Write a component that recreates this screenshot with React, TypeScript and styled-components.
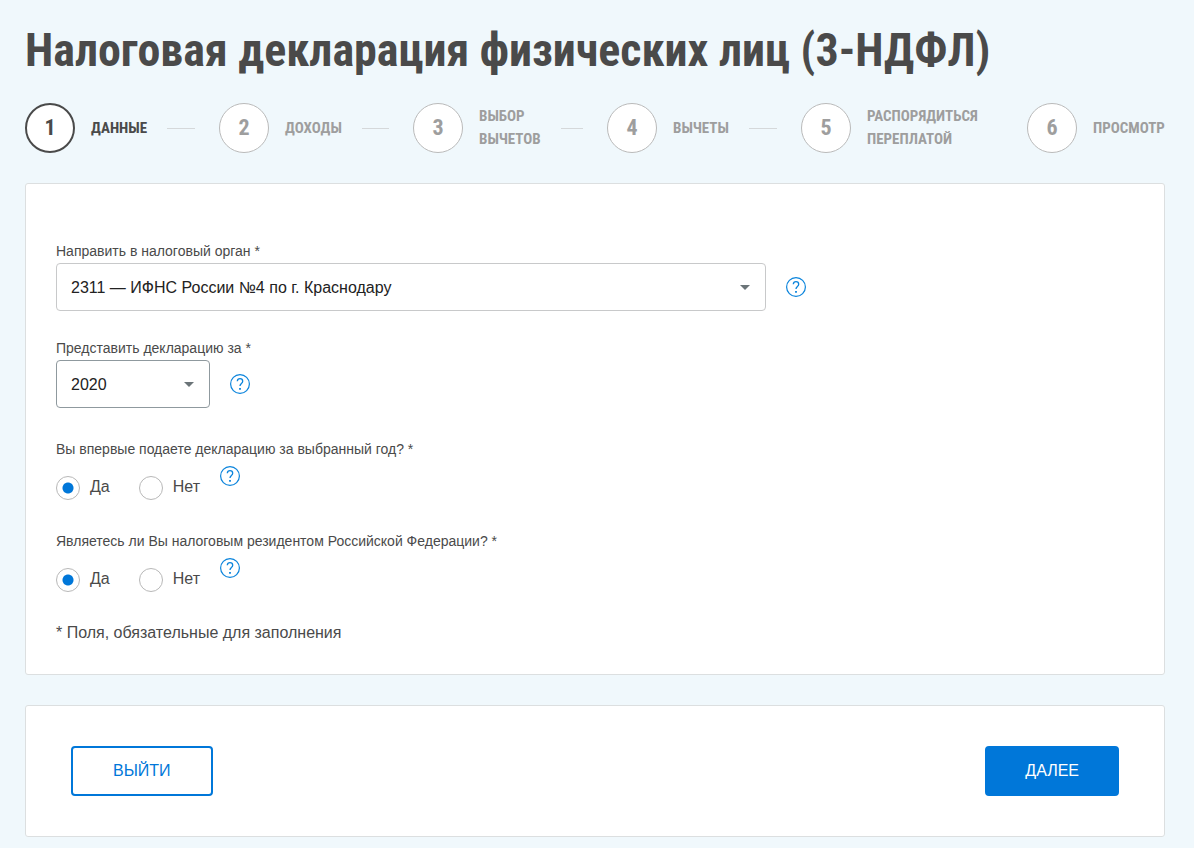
import React, { useState } from "react";
import styled, { createGlobalStyle } from "styled-components";

const display =
  '"Roboto Condensed", "Liberation Sans Narrow", "Open Sans Condensed", "DejaVu Sans Condensed", sans-serif';

const GlobalStyle = createGlobalStyle`
  *, *::before, *::after { box-sizing: border-box; }
  body {
    margin: 0;
    background: #f0f8fc;
    color: #4a4a4a;
    font-family: "Liberation Sans", Arial, sans-serif;
    font-size: 16px;
    line-height: 20px;
  }
`;

const Page = styled.main`
  padding: 18px 29px 11px 25px;
`;

const Title = styled.h1`
  margin: 0 0 21px;
  font-family: ${display};
  font-size: 46px;
  font-weight: 700;
  line-height: 64px;
`;

const Steps = styled.ol`
  display: grid;
  grid-template-columns: repeat(4, 194fr) 226fr 138fr;
  margin: 0 0 30px;
  padding: 0;
  list-style: none;
`;

const Step = styled.li<{ $active?: boolean }>`
  display: flex;
  align-items: center;
  min-width: 0;
  height: 50px;
  font-family: ${display};
  font-weight: 700;
  color: ${(p) => (p.$active ? "#4a4a4a" : "#9e9e9e")};
`;

const StepNumber = styled.span<{ $active?: boolean }>`
  flex: none;
  display: flex;
  align-items: center;
  justify-content: center;
  width: 50px;
  height: 50px;
  margin-right: 16px;
  border: ${(p) => (p.$active ? "2px solid #4a4a4a" : "1px solid #bababa")};
  border-radius: 50%;
  background: #fff;
  font-size: 22px;
`;

const StepLabel = styled.span`
  font-size: 15px;
  line-height: 23px;
  text-transform: uppercase;
  white-space: pre-line;
`;

const StepDash = styled.span`
  flex: 1;
  height: 1px;
  margin: 0 24px 0 20px;
  background: #d5d8da;
`;

const Card = styled.section`
  border: 1px solid #dcdfe0;
  border-radius: 3px;
  background: #fff;
`;

const FormCard = styled(Card)`
  padding: 57px 30px 31px;
`;

const ActionsCard = styled(Card)`
  display: flex;
  justify-content: space-between;
  margin-top: 30px;
  padding: 40px 45px;
`;

const Field = styled.div`
  margin-bottom: 27px;
`;

const FieldLabel = styled.label`
  display: block;
  margin-bottom: 2px;
  font-size: 14px;
`;

const ControlRow = styled.div`
  display: flex;
  align-items: center;
  gap: 20px;
`;

const SelectBox = styled.div<{ $width: number }>`
  position: relative;
  width: ${(p) => p.$width}px;
  max-width: 100%;
`;

const Select = styled.select<{ $strong?: boolean }>`
  appearance: none;
  display: block;
  width: 100%;
  height: 48px;
  padding: 2px 36px 0 14px;
  border: 1px solid ${(p) => (p.$strong ? "#8f999e" : "#c8c9ca")};
  border-radius: 4px;
  background: #fff;
  color: #222;
  font: inherit;
`;

const Arrow = styled.svg`
  position: absolute;
  right: 16px;
  top: 22px;
  pointer-events: none;
`;

const HelpButton = styled.button`
  flex: none;
  width: 20px;
  height: 20px;
  padding: 0;
  border: 0;
  background: none;
  cursor: pointer;

  svg { display: block; }
`;

const RadioField = styled.fieldset`
  min-width: 0;
  margin: 31px 0 0;
  padding: 0;
  border: 0;
`;

const Legend = styled.legend`
  padding: 0;
  font-size: 14px;
`;

const RadioRow = styled.div`
  display: flex;
  align-items: flex-start;
  gap: 20px;
  margin-top: 7px;
`;

const Options = styled.div`
  display: flex;
  gap: 29px;
  padding-top: 10px;
`;

const Option = styled.label`
  display: flex;
  align-items: flex-start;
  gap: 10px;
  line-height: 22px;
  cursor: pointer;
`;

const Radio = styled.input`
  appearance: none;
  flex: none;
  width: 24px;
  height: 24px;
  margin: 0;
  border: 1px solid #b8b8b8;
  border-radius: 50%;
  background: #fff;

  &:checked {
    background: radial-gradient(circle, #0077d9 5px, #fff 6px);
  }
`;

const Note = styled.p`
  margin: 31px 0 0;
`;

const Button = styled.button<{ $primary?: boolean }>`
  height: 50px;
  padding: 0 ${(p) => (p.$primary ? 38 : 40)}px;
  border: 2px solid #0077d9;
  border-radius: 4px;
  background: ${(p) => (p.$primary ? "#0077d9" : "#fff")};
  color: ${(p) => (p.$primary ? "#fff" : "#0077d9")};
  font: inherit;
  text-transform: uppercase;
  cursor: pointer;
`;

function Help() {
  return (
    <HelpButton type="button" aria-label="Справка">
      <svg width="20" height="20" viewBox="0 0 20 20" fill="none" stroke="#0b84dc">
        <circle cx="10" cy="10" r="9.4" strokeWidth="1.2" />
        <path d="M7.3 7.3C7.4 5.6 8.5 4.7 10 4.7s2.7 1 2.7 2.5c0 1.2-.7 1.8-1.4 2.4-.8.7-1.3 1.1-1.3 2.5" strokeWidth="1.3" />
        <path d="M9.1 14.8h1.8" strokeWidth="1.8" />
      </svg>
    </HelpButton>
  );
}

function SelectArrow() {
  return (
    <Arrow width="10" height="5" viewBox="0 0 10 5" aria-hidden="true">
      <path d="M0 0h10L5 5z" fill="#6b7478" />
    </Arrow>
  );
}

function YesNo({ name, question }: { name: string; question: string }) {
  const [value, setValue] = useState("Да");
  return (
    <RadioField>
      <Legend>{question}</Legend>
      <RadioRow>
        <Options>
          {["Да", "Нет"].map((option) => (
            <Option key={option}>
              <Radio
                type="radio"
                name={name}
                checked={value === option}
                onChange={() => setValue(option)}
              />
              {option}
            </Option>
          ))}
        </Options>
        <Help />
      </RadioRow>
    </RadioField>
  );
}

const steps = [
  "Данные",
  "Доходы",
  "Выбор\nвычетов",
  "Вычеты",
  "Распорядиться\nпереплатой",
  "Просмотр",
];

export default function App() {
  return (
    <>
      <GlobalStyle />
      <Page>
        <Title>Налоговая декларация физических лиц (3-НДФЛ)</Title>
        <Steps>
          {steps.map((label, i) => (
            <Step key={label} $active={i === 0}>
              <StepNumber $active={i === 0}>{i + 1}</StepNumber>
              <StepLabel>{label}</StepLabel>
              {i < 4 && <StepDash />}
            </Step>
          ))}
        </Steps>
        <FormCard>
          <Field>
            <FieldLabel htmlFor="office">Направить в налоговый орган *</FieldLabel>
            <ControlRow>
              <SelectBox $width={710}>
                <Select id="office">
                  <option>2311 — ИФНС России №4 по г. Краснодару</option>
                </Select>
                <SelectArrow />
              </SelectBox>
              <Help />
            </ControlRow>
          </Field>
          <Field>
            <FieldLabel htmlFor="year">Представить декларацию за *</FieldLabel>
            <ControlRow>
              <SelectBox $width={154}>
                <Select id="year" $strong>
                  <option>2020</option>
                </Select>
                <SelectArrow />
              </SelectBox>
              <Help />
            </ControlRow>
          </Field>
          <YesNo name="first" question="Вы впервые подаете декларацию за выбранный год? *" />
          <YesNo
            name="resident"
            question="Являетесь ли Вы налоговым резидентом Российской Федерации? *"
          />
          <Note>* Поля, обязательные для заполнения</Note>
        </FormCard>
        <ActionsCard>
          <Button type="button">Выйти</Button>
          <Button type="button" $primary>
            Далее
          </Button>
        </ActionsCard>
      </Page>
    </>
  );
}
